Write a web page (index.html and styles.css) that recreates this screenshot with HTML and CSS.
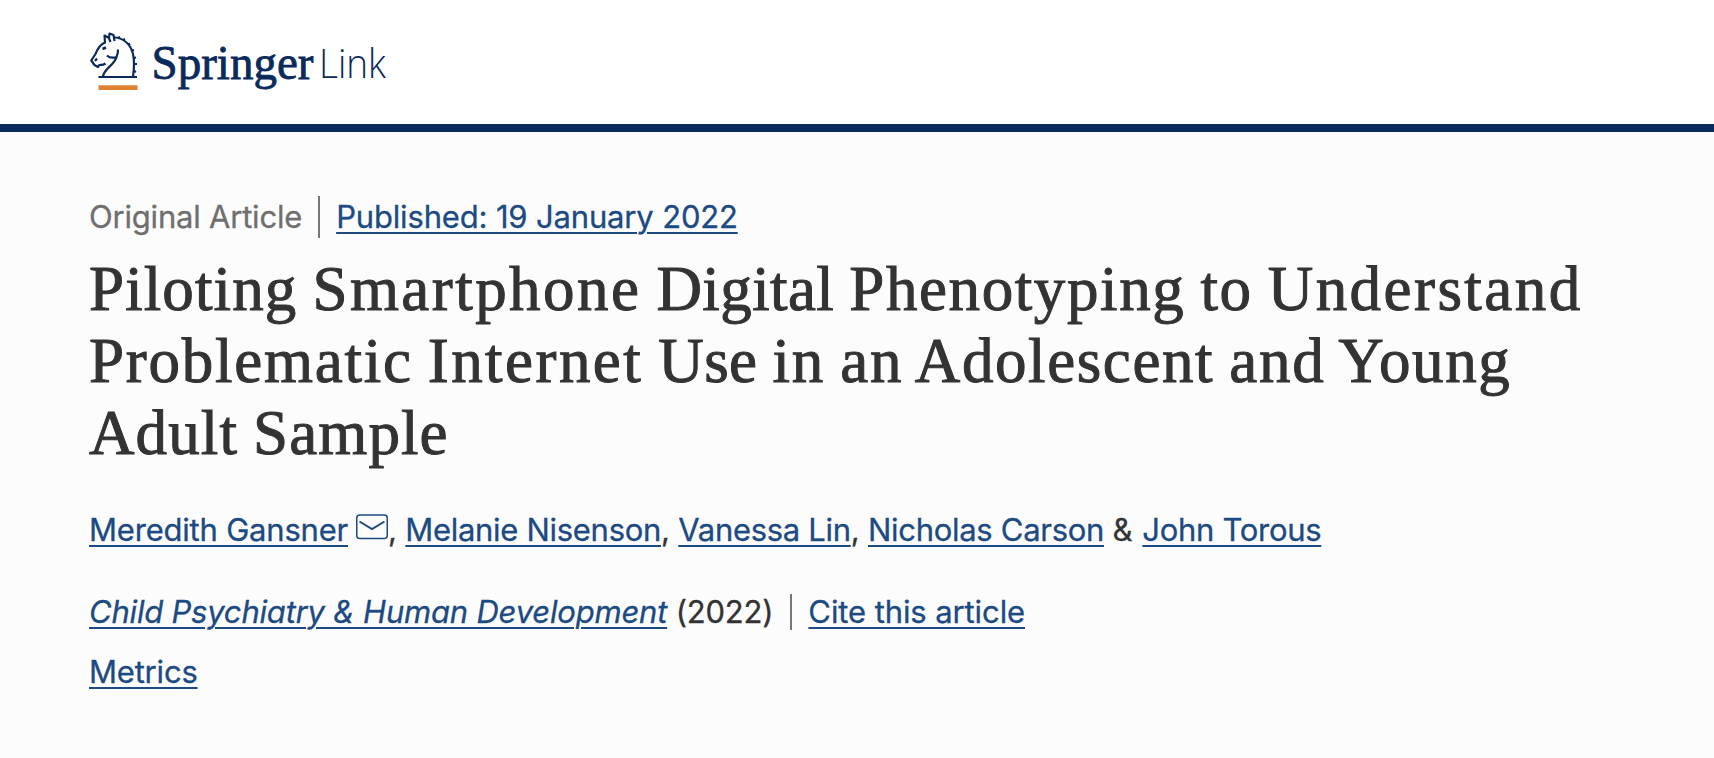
FILE: index.html
```html
<!DOCTYPE html>
<html lang="en">
<head>
<meta charset="utf-8">
<title>Piloting Smartphone Digital Phenotyping | SpringerLink</title>
<link rel="stylesheet" href="styles.css">
</head>
<body>
<header class="header">
  <svg class="logo" width="320" height="80" viewBox="0 0 320 80" role="img" aria-label="Springer Link">
    <g fill="none" stroke="#0a2a5b" stroke-width="2.200" stroke-linejoin="round">
      <path d="M18.500 37H57"/>
      <path d="M22.800 37C24 28 34 26 36.500 17C37.800 14 38.200 12 38 9.500M36.800 17C33 18.200 29 17.500 27 15.500"/>
      <path d="M25.500 23.500C22 26 20 24 18.800 25.500L18 27L14.500 25L11.200 20.500L15.500 14C17 10 19 5 25 2.500L24.500-4.500L29-2L29.500-6.500L33.500-5L34.500 1M28.500-3L30.500 2M33-3C45-2 51 6 53 14C55 23 54 30 53 37"/>
      <path d="M22.500 9L26 7.500" stroke-width="2.500"/><path d="M15 21L17 18.500"/>
      <path d="M38-2L40-3M43 0L45-1M48 5L50 3.500M51 11L54 10M53 18L56 17.500M54 24L57 24M54 31L56 32"/>
    </g>
    <rect x="18.500" y="45.300" width="39" height="4.700" fill="#df8133"/>
    <text class="logo-springer" x="71.500" y="38.500" textLength="162" lengthAdjust="spacingAndGlyphs">Springer</text>
    <text class="logo-link" x="239" y="38" textLength="67" lengthAdjust="spacingAndGlyphs">Link</text>
  </svg>
</header>
<main class="article">
  <div class="meta"><span class="kind">Original Article</span><a class="published" href="#">Published: 19 January 2022</a></div>
  <h1 class="title"><span class="snug">Piloting</span> <span class="wide">Smartphone</span> <span class="tight">Digital</span> Phenotyping to <span class="wide">Understand</span><br><span class="loose">Problematic</span> <span class="wide">Internet</span> <span class="tight">Use</span> <span class="loose">in an</span> Adolescent <span class="loose">and</span> Young<br><span class="snug">Adult</span> <span class="snug">Sample</span></h1>
  <p class="authors"><a href="#">Meredith Gansner</a><svg class="mail" width="32" height="26" viewBox="0 0 32 26" fill="none" stroke="#1c4a82" stroke-width="1.500"><rect x=".75" y="1" width="30.500" height="23.500" rx="3"/><path d="M3.500 7.500L16 15L28.500 7.500" stroke-width="2"/></svg><span>, </span><a class="close" href="#">Melanie Nisenson</a><span>, </span><a class="close" href="#">Vanessa Lin</a><span>, </span><a class="close" href="#">Nicholas Carson</a><span class="amp"> &amp; </span><a class="close" href="#">John Torous</a></p>
  <p class="journal"><a class="name" href="#">Child Psychiatry &amp; Human Development</a><span class="year"> (2022)</span><a class="cite" href="#">Cite this article</a></p>
  <p class="metrics"><a href="#">Metrics</a></p>
</main>
</body>
</html>
```
FILE: styles.css
```css
body {
  margin: 0;
  min-height: 758px;
  background: #fcfcfc;
  color: #333;
  font: 31px/48px Inter, "Liberation Sans", sans-serif;
  letter-spacing: -.2px;
}
.header {
  box-sizing: border-box;
  height: 132px;
  padding: 40px 0 0 80px;
  background: #fff;
  border-bottom: 8px solid #0a2a5b;
}
.logo { display: block; overflow: visible; fill: #0a2a5b; letter-spacing: 0; }
.logo-springer { font: 48px "Liberation Serif", serif; stroke: #0a2a5b; stroke-width: .8px; }
.logo-link { font: 300 41px "Open Sans", sans-serif; }
.article { padding: 61px 0 0 89px; -webkit-text-stroke: .3px; }
.article a {
  color: #1c4a82;
  text-decoration: underline 2px;
  text-underline-offset: 4px;
}
.meta { display: flex; align-items: center; height: 48px; }
.published { line-height: 46px; margin-top: -1px; letter-spacing: -.16px; }
.kind {
  color: #6f6f6f;
  line-height: 42px;
  padding-right: 16px;
  margin-right: 16px;
  border-right: 2px solid #777;
}
.title {
  margin: 12px 0 0;
  font: 400 63px/72px "Liberation Serif", serif;
  letter-spacing: 1.6px;
  word-spacing: -2.3px;
  white-space: nowrap;
  -webkit-text-stroke: 1px #333;
}
.tight { letter-spacing: .4px; }
.snug { letter-spacing: 1.1px; }
.loose { letter-spacing: 1.75px; }
.wide { letter-spacing: 2.45px; }
.authors, .journal, .metrics {
  display: flex;
  height: 48px;
  margin: 0;
  white-space: pre;
}
.authors { margin-top: 37px; }
.close { letter-spacing: -.3px; }
.amp { padding-right: 1.5px; }
.mail { margin: 8px 0 0 8px; }
.journal { margin-top: 34px; }
.name { font-style: italic; }
.year {
  padding-right: 19px;
  background: linear-gradient(#777, #777) right 6px / 2px 36px no-repeat;
}
.cite { margin-left: 16px; letter-spacing: -.1px; }
.metrics { margin-top: 12px; }
```
